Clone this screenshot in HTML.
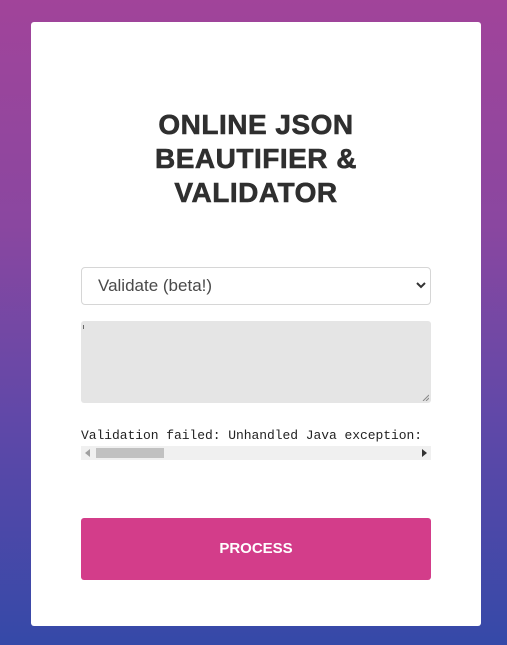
<!DOCTYPE html>
<html><head><style>
html,body{margin:0;padding:0;width:507px;height:645px;overflow:hidden}
body{background:linear-gradient(180deg,#a1449a 0%,#8a47a0 35%,#6048a8 65%,#3549a8 100%);position:relative;font-family:"Liberation Sans",sans-serif}
.card{position:absolute;left:31px;top:22px;width:450px;height:604px;background:#fff;border-radius:3px}
h1{position:absolute;left:0;width:450px;top:86px;margin:0;text-align:center;font-size:28px;line-height:34px;font-weight:900;color:#2f2f2f;letter-spacing:0.5px;-webkit-text-stroke:0.6px #2f2f2f}
.sel{position:absolute;left:50px;top:245px;width:348px;height:36px;border:1px solid #d6d6d6;border-radius:4px;font-size:17px;color:#4a4a4a;line-height:36px}
.sel span{position:absolute;left:16px}
.sel svg{position:absolute;right:4px;top:14px}
.ta{position:absolute;left:50px;top:299px;width:350px;height:82px;background:#e5e5e5;border-radius:3px}
.ta i{position:absolute;left:2px;top:4px;width:1px;height:4px;background:#666}
.msg{position:absolute;left:50px;top:406px;font-family:"Liberation Mono",monospace;font-size:13px;color:#222;white-space:pre;letter-spacing:-0.05px}
.sb{position:absolute;left:50px;top:424px;width:350px;height:14px;background:#f0f0f0}
.sb b{position:absolute;left:15px;top:2px;width:68px;height:10px;background:#c1c1c1}
.btn{position:absolute;left:50px;top:496px;width:350px;height:62px;background:#d33d8a;border-radius:3px;color:#fff;font-weight:bold;font-size:15px;text-align:center;line-height:62px}
</style></head><body>
<div class="card">
<h1>ONLINE JSON<br>BEAUTIFIER &amp;<br>VALIDATOR</h1>
<div class="sel"><span>Validate (beta!)</span><svg width="10" height="7" viewBox="0 0 10 7"><path d="M1 1l4 4 4-4" stroke="#333" stroke-width="2" fill="none"/></svg></div>
<div class="ta"><i></i><svg style="position:absolute;right:2px;bottom:2px" width="7" height="7"><path d="M1 7L7 1M4 7L7 4" stroke="#888" stroke-width="1"/></svg></div>
<div class="msg">Validation failed: Unhandled Java exception:</div>
<div class="sb"><svg style="position:absolute;left:4px;top:3px" width="5" height="8"><path d="M5 0L0 4 5 8z" fill="#a0a0a0"/></svg><b></b><svg style="position:absolute;right:4px;top:3px" width="5" height="8"><path d="M0 0L5 4 0 8z" fill="#333"/></svg></div>
<div class="btn">PROCESS</div>
</div>
</body></html>
